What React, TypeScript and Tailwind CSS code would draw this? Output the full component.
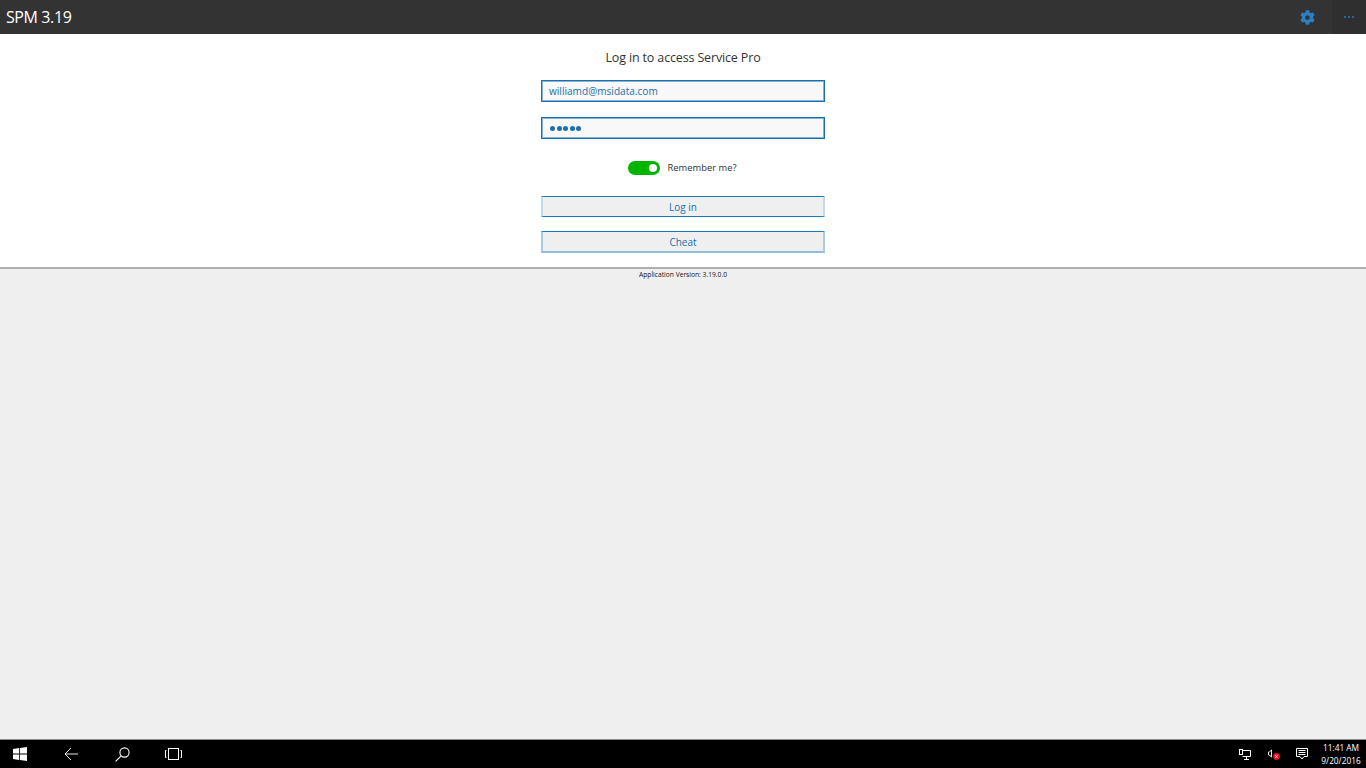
import { FaCog } from 'react-icons/fa';

const font = { fontFamily: '"Open Sans", "Noto Sans", sans-serif' };

const TaskbarIcons = () => (
  <div className="flex items-center h-full pl-[13px]">
    <svg width="14" height="14" viewBox="0 0 14 14" fill="#fff">
      <path d="M0 2 L6.2 1.1 V6.6 H0 Z M7 1 L14 0 V6.6 H7 Z M0 7.4 H6.2 V12.9 L0 12 Z M7 7.4 H14 V14 L7 13 Z" />
    </svg>
    <svg width="14" height="14" viewBox="0 0 14 14" fill="none" stroke="#fff" strokeWidth="0.9" className="ml-[37px]">
      <path d="M7 1 L1 7 L7 13 M1 7 H14" />
    </svg>
    <svg width="15" height="15" viewBox="0 0 15 15" fill="none" stroke="#fff" strokeWidth="1.1" className="ml-[37px]">
      <circle cx="9.5" cy="5.5" r="4.6" />
      <path d="M6.2 8.8 L0.6 14.4" />
    </svg>
    <svg width="17" height="12" viewBox="0 0 17 12" fill="none" stroke="#fff" strokeWidth="1" className="ml-[35px]">
      <rect x="3.5" y="0.5" width="10" height="11" />
      <path d="M1.5 2.5 H0.5 V9.5 H1.5 M15.5 2.5 H16.5 V9.5 H15.5" />
    </svg>
  </div>
);

const TrayIcons = () => (
  <div className="flex items-center h-full">
    <svg width="12" height="11" viewBox="0 0 12 11" fill="none" stroke="#fff" strokeWidth="1" className="mr-[17px]">
      <path d="M3.5 1.5 H11.5 V7.5 H3.5 M7.5 7.5 V10 M5 10.5 H10" />
      <rect x="0.5" y="0.5" width="3" height="5" fill="#000" />
    </svg>
    <svg width="12" height="11" viewBox="0 0 12 11" className="mr-[16px]">
      <path d="M0.5 3 H1.5 L3.5 0.8 V8.2 L1.5 6 H0.5 Z" fill="none" stroke="#fff" strokeWidth="0.9" />
      <circle cx="8.5" cy="7.5" r="3.4" fill="#e81123" />
      <path d="M7.2 6.2 L9.8 8.8 M9.8 6.2 L7.2 8.8" stroke="#fff" strokeWidth="0.9" />
    </svg>
    <svg width="12" height="12" viewBox="0 0 12 12" fill="none" stroke="#fff" strokeWidth="1" className="mr-[8px]">
      <path d="M0.5 0.5 H11.5 V8.5 H8 L6 11 L4 8.5 H0.5 Z M2.5 2.5 H9.5 M2.5 4.5 H9.5 M2.5 6.5 H9.5" />
    </svg>
    <div className="w-[50px] text-center text-white text-[8.3px] leading-[13px]">
      <div>11:41 AM</div>
      <div>9/20/2016</div>
    </div>
  </div>
);

const Dot = () => <span className="w-[5px] h-[5px] rounded-full bg-[#1a6fae]" />;

const EllipsisDot = () => <span className="w-[2px] h-[2px] bg-[#1f6aa3]" />;

export default function App() {
  return (
    <div className="h-[768px] flex flex-col overflow-hidden bg-[#efefef]" style={font}>
      <header className="h-[34px] bg-[#333333] flex items-stretch justify-between">
        <div className="pl-[6px] flex items-center text-white text-[16px] tracking-[-0.4px]">SPM 3.19</div>
        <div className="flex items-stretch">
          <div className="w-[50px] flex items-center justify-center">
            <FaCog size={15} className="text-[#2b7fc3]" />
          </div>
          <div className="w-[34px] bg-[#2f2f2f] flex items-center justify-center gap-[2px]">
            <EllipsisDot />
            <EllipsisDot />
            <EllipsisDot />
          </div>
        </div>
      </header>

      <main className="h-[235px] bg-white flex flex-col items-center pt-[14px] border-b-2 border-[#b0b0b0]">
        <div className="text-[12.5px] tracking-[-0.15px] leading-[19px] text-[#333333]">Log in to access Service Pro</div>
        <div className="w-[284px] mt-[13px] flex flex-col">
          <div className="h-[22px] pt-[1px] border border-[#1a6fae] shadow-[inset_0_0_0_1px_#84b3d6] bg-[#f8f8f8] pl-[7px] flex items-center text-[10.1px] text-[#1a6fae]">
            williamd@msidata.com
          </div>
          <div className="h-[22px] mt-[15px] border border-[#1a6fae] shadow-[inset_0_0_0_1px_#84b3d6] bg-[#f8f8f8] pl-[8px] flex items-center gap-[1.5px]">
            <Dot />
            <Dot />
            <Dot />
            <Dot />
            <Dot />
          </div>
          <div className="mt-[22px] h-[14px] pr-[2px] flex items-center justify-center">
            <div className="w-[32px] h-[14px] rounded-full bg-[#00b400] flex items-center justify-end pr-[3px]">
              <span className="w-[8px] h-[8px] rounded-full bg-white" />
            </div>
            <span className="ml-[8px] text-[9.4px] text-[#333333]">Remember me?</span>
          </div>
          <button className="mt-[21px] h-[21px] pt-[1px] border-y border-x-2 border-y-[#1a78bd] border-x-[#c4dbec] bg-[#efefef] text-[10px] text-[#1a6fae]">
            Log in
          </button>
          <button className="mt-[14px] h-[22px] pt-[1px] border-t border-b-2 border-x-2 border-t-[#1a78bd] border-b-[#8fbde0] border-x-[#a9cce6] bg-[#efefef] text-[10px] text-[#1a6fae]">
            Cheat
          </button>
        </div>
      </main>

      <div className="flex-1 pt-[1px] text-center text-[6.7px] leading-[10px] text-[#111111]">
        Application Version: 3.19.0.0
      </div>

      <footer className="h-[29px] border-t border-[#8a8a8a] bg-black flex items-center justify-between">
        <TaskbarIcons />
        <TrayIcons />
      </footer>
    </div>
  );
}
